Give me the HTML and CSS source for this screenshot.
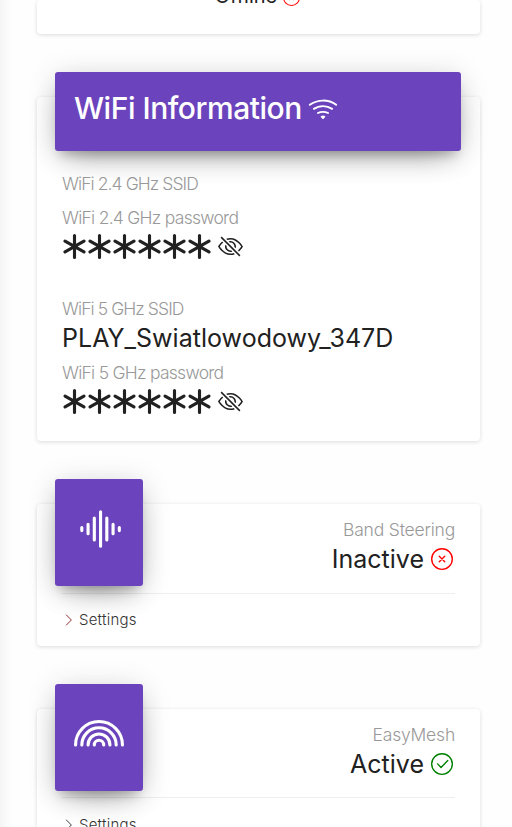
FILE: index.html
```html
<!DOCTYPE html>
<html lang="en">
<head>
<meta charset="utf-8">
<title>WiFi Information</title>
<link rel="stylesheet" href="styles.css">
</head>
<body>
<svg class="defs" aria-hidden="true">
  <symbol id="asterisk" viewBox="0 0 16 16"><path d="M8 0a1 1 0 0 1 1 1v5.268l4.562-2.634a1 1 0 1 1 1 1.732L10 8l4.562 2.634a1 1 0 1 1-1 1.732L9 9.732V15a1 1 0 1 1-2 0V9.732l-4.562 2.634a1 1 0 1 1-1-1.732L6 8 1.438 5.366a1 1 0 0 1 1-1.732L7 6.268V1a1 1 0 0 1 1-1z"/></symbol>
  <symbol id="eye-slash" viewBox="0 0 16 16"><path d="M13.359 11.238C15.06 9.72 16 8 16 8s-3-5.5-8-5.5a7 7 0 0 0-2.79.588l.77.771A6 6 0 0 1 8 3.5c2.12 0 3.879 1.168 5.168 2.457A13 13 0 0 1 14.828 8q-.086.13-.195.288c-.335.48-.83 1.12-1.465 1.755q-.247.248-.517.486z"/><path d="M11.297 9.176a3.5 3.5 0 0 0-4.474-4.474l.823.823a2.5 2.5 0 0 1 2.829 2.829zm-2.943 1.299.822.822a3.5 3.5 0 0 1-4.474-4.474l.823.823a2.5 2.5 0 0 0 2.829 2.829"/><path d="M3.35 5.47q-.27.24-.518.487A13 13 0 0 0 1.172 8l.195.288c.335.48.83 1.12 1.465 1.755C4.121 11.332 5.881 12.5 8 12.5c.716 0 1.39-.133 2.02-.36l.77.772A7 7 0 0 1 8 13.5C3 13.5 0 8 0 8s.939-1.721 2.641-3.238l.708.709zm10.296 8.884-12-12 .708-.708 12 12z"/></symbol>
  <symbol id="x-circle" viewBox="0 0 16 16"><g fill="none" stroke="currentColor"><circle cx="8" cy="8" r="7.5"/><path stroke-linecap="round" d="M6 6l4 4M10 6l-4 4"/></g></symbol>
  <symbol id="check-circle" viewBox="0 0 16 16"><g fill="none" stroke="currentColor"><circle cx="8" cy="8" r="7.5"/><path stroke-linecap="round" stroke-linejoin="round" d="M4.8 7.9l2.5 2.6 4.9-5"/></g></symbol>
</svg>
<main class="page">
  <section class="card status-card">
    <div class="value">Offline <svg class="icon bad"><use href="#x-circle"/></svg></div>
  </section>

  <section class="card wifi-card">
    <header class="banner">
      <h3 class="title">WiFi Information</h3>
      <svg class="wifi-icon" viewBox="0 0 16 16" fill="currentColor"><path d="M15.384 6.115a.485.485 0 0 0-.047-.736A12.44 12.44 0 0 0 8 3C5.259 3 2.723 3.882.663 5.379a.485.485 0 0 0-.048.736.52.52 0 0 0 .668.05A11.45 11.45 0 0 1 8 4c2.507 0 4.827.802 6.716 2.164.205.148.49.13.668-.049"/><path d="M13.229 8.271a.482.482 0 0 0-.063-.745A9.46 9.46 0 0 0 8 6c-1.905 0-3.68.56-5.166 1.526a.48.48 0 0 0-.063.745.525.525 0 0 0 .652.065A8.46 8.46 0 0 1 8 7a8.46 8.46 0 0 1 4.576 1.336c.206.132.48.108.653-.065m-2.183 2.183c.226-.226.185-.605-.1-.75A6.5 6.5 0 0 0 8 9c-1.06 0-2.062.254-2.946.704-.285.145-.326.524-.1.75l.015.015c.16.16.407.19.611.09A5.5 5.5 0 0 1 8 10c.868 0 1.69.201 2.42.56.203.1.45.07.61-.091zM9.06 12.44c.196-.196.198-.52-.04-.66A2 2 0 0 0 8 11.5a2 2 0 0 0-1.02.28c-.238.14-.236.464-.04.66l.706.706a.5.5 0 0 0 .707 0l.707-.707z"/></svg>
    </header>
    <div class="fields">
      <p class="label l24s">WiFi 2.4 GHz SSID</p>
      <p class="label l24p second">WiFi 2.4 GHz password</p>
      <div class="secret">
        <svg class="star"><use href="#asterisk"/></svg><svg class="star"><use href="#asterisk"/></svg><svg class="star"><use href="#asterisk"/></svg><svg class="star"><use href="#asterisk"/></svg><svg class="star"><use href="#asterisk"/></svg><svg class="star"><use href="#asterisk"/></svg>
        <svg class="eye"><use href="#eye-slash"/></svg>
      </div>
      <p class="label l5s third">WiFi 5 GHz SSID</p>
      <div class="value ssid">PLAY_Swiatlowodowy_347D</div>
      <p class="label l5p">WiFi 5 GHz password</p>
      <div class="secret">
        <svg class="star"><use href="#asterisk"/></svg><svg class="star"><use href="#asterisk"/></svg><svg class="star"><use href="#asterisk"/></svg><svg class="star"><use href="#asterisk"/></svg><svg class="star"><use href="#asterisk"/></svg><svg class="star"><use href="#asterisk"/></svg>
        <svg class="eye"><use href="#eye-slash"/></svg>
      </div>
    </div>
  </section>

  <section class="card feature">
    <div class="top">
      <div class="tile"><svg viewBox="0 0 16 16"><path fill="none" stroke="currentColor" stroke-linecap="round" d="M2.5 7.5v1M4.5 6.5v3M6.5 4.5v7M8.5 2.5v11M10.5 4.5v7M12.5 6.5v3M14.5 7.5v1"/></svg></div>
      <div class="info">
        <p class="label band">Band Steering</p>
        <div class="value inactive">Inactive <svg class="icon bad"><use href="#x-circle"/></svg></div>
      </div>
    </div>
    <div class="footer"><svg class="chevron" viewBox="0 0 16 16"><path d="M4.7 2l6 6-6 6"/></svg><span>Settings</span></div>
  </section>

  <section class="card feature mesh">
    <div class="top">
      <div class="tile"><svg viewBox="0 0 16 16"><path fill="none" stroke="currentColor" stroke-linecap="round" d="M.5 11.5a7.5 7.5 0 0 1 15 0M2.5 11.5a5.5 5.5 0 0 1 11 0M4.5 11.5a3.5 3.5 0 0 1 7 0M6.5 11.5a1.5 1.5 0 0 1 3 0"/></svg></div>
      <div class="info">
        <p class="label easy">EasyMesh</p>
        <div class="value active">Active <svg class="icon good"><use href="#check-circle"/></svg></div>
      </div>
    </div>
    <div class="footer"><svg class="chevron" viewBox="0 0 16 16"><path d="M4.7 2l6 6-6 6"/></svg><span>Settings</span></div>
  </section>
</main>
</body>
</html>
```
FILE: styles.css
```css
* { box-sizing: border-box; }
html, body { margin: 0; height: 827px; overflow: hidden; }
body { background: #fefefe; color: #212121; font-family: Inter, "Open Sans", sans-serif; }
p, h3 { margin: 0; font-weight: inherit; }
svg { display: block; flex: none; fill: currentColor; }
.defs { position: absolute; width: 0; height: 0; }
.page { height: 827px; overflow: hidden; padding: 0 32px 0 37px; display: flex; flex-direction: column; box-shadow: inset 12px 0 12px -8px rgba(0,0,0,.05); }
.card { flex: none; background: #fff; border-radius: 4px; box-shadow: 0 1px 4px rgba(0,0,0,.14); padding: 0 25px; }
.status-card { height: 34px; display: flex; justify-content: center; }
.status-card .value { margin: -22px 2px 0 0; font-size: 20px; gap: 6px; }
.status-card .icon { width: 17px; height: 17px; margin-top: 3px; }
.wifi-card { margin-top: 63px; height: 344px; padding: 0; }
.banner { margin: -25px 19px 0 18px; height: 79px; padding: 0 19px; display: flex; align-items: flex-start; }
.banner, .tile { background: #6b43bc; color: #fff; border-radius: 3px; box-shadow: 0 12px 30px -12px rgba(0,0,0,.42), 0 4px 30px rgba(0,0,0,.14), 0 8px 10px -5px rgba(0,0,0,.2); }
.title { width: 227px; font-size: 30px; line-height: 36px; font-weight: 500; letter-spacing: -.48px; padding-top: 18px; white-space: nowrap; }
.wifi-icon { width: 30px; height: 30px; margin: 22px 0 0 7px; }
.fields { padding: 21px 25px 0; }
.label { color: #999; font-size: 17.5px; line-height: 24px; font-weight: 300; letter-spacing: -.6px; white-space: nowrap; }
.l24s, .l5s { letter-spacing: -.92px; }
.l24p, .l5p { letter-spacing: -.73px; }
.band, .easy { letter-spacing: -.2px; }
.second { margin-top: 10px; }
.third { margin-top: 36px; }
.value { display: flex; align-items: center; gap: 7px; height: 36px; font-size: 25px; line-height: 36px; font-weight: 400; white-space: nowrap; }
.ssid { height: 40px; line-height: 35px; align-items: flex-start; letter-spacing: .03px; }
.secret { display: flex; align-items: center; height: 30px; margin-top: 1px; }
.star { width: 25px; height: 25px; }
.eye { width: 25px; height: 25px; margin-left: 6px; }
.icon { width: 22px; height: 22px; }
.bad { color: #f00; }
.good { color: #008000; }
.feature { margin-top: 63px; height: 142px; }
.top { height: 90px; border-bottom: 1px solid #eee; display: flex; justify-content: space-between; }
.mesh .top { height: 89px; }
.tile { width: 88px; height: 107px; margin: -25px 0 0 -7px; padding: 25px 19px; }
.tile svg { width: 50px; height: 50px; }
.info { display: flex; flex-direction: column; align-items: flex-end; padding-top: 14px; }
.info .value { margin-top: -1px; padding-right: 2px; }
.footer { height: 51px; display: flex; align-items: center; gap: 3px; font-size: 15px; font-weight: 300; letter-spacing: .22px; color: #333; }
.mesh .footer { height: 53px; }
.chevron { width: 14px; height: 14px; fill: none; stroke: #8b2a2a; stroke-width: 1.1; }
.mesh .chevron { stroke: #333; }
```
